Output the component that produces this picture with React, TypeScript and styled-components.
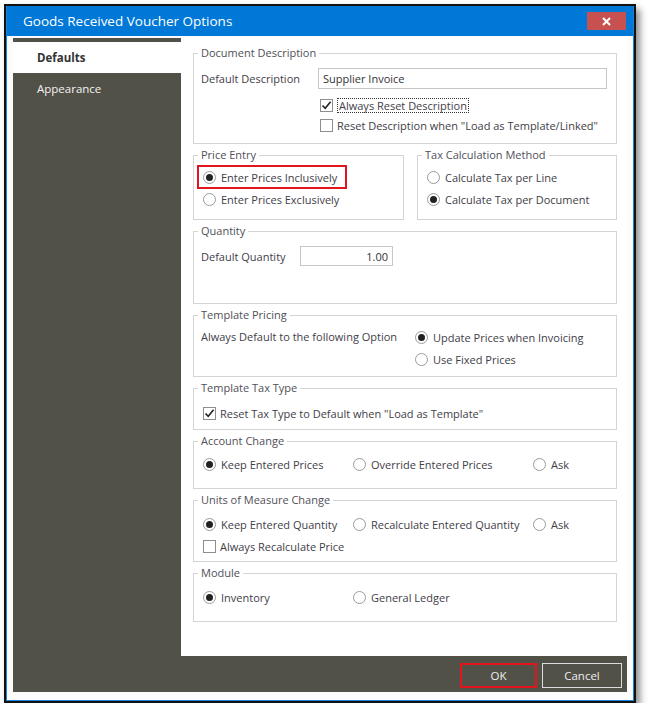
import React from 'react';
import styled, { createGlobalStyle } from 'styled-components';

const GlobalStyle = createGlobalStyle`
  html, body {
    margin: 0;
    background: #ffffff;
  }
  body {
    font-family: "Open Sans", "Noto Sans", sans-serif;
    font-size: 11px;
    color: #3f4048;
  }
`;

const Page = styled.div`
  padding: 4px 0 0 4px;
`;

const Window = styled.div`
  width: 632px;
  height: 699px;
  box-sizing: border-box;
  border: 2px solid #121212;
  box-shadow: 4px 5px 7px rgba(0, 0, 0, 0.45);
  background: #fff;
`;

const Frame = styled.div`
  height: 100%;
  box-sizing: border-box;
  border: 1px solid #1c84d8;
  border-top: none;
  display: flex;
  flex-direction: column;
`;

const TitleBar = styled.div`
  height: 30px;
  flex: none;
  background: #0078d7;
  display: flex;
  align-items: center;
  justify-content: space-between;
  padding: 0 7px 0 16px;
`;

const Title = styled.span`
  color: #fff;
  font-size: 13.5px;
`;

const CloseButton = styled.button`
  width: 39px;
  height: 18px;
  border: none;
  padding: 0;
  background: #c75050;
  display: flex;
  align-items: center;
  justify-content: center;
`;

const Body = styled.div`
  flex: 1;
  padding: 2px 6px 8px 6px;
  background: #fbfbfb;
  display: flex;
`;

const Panel = styled.div`
  flex: 1;
  background: #525148;
  display: grid;
  grid-template-columns: 168px 1fr;
  grid-template-rows: 618px 36px;
`;

const Nav = styled.nav`
  display: flex;
  flex-direction: column;
  padding-top: 4px;
`;

const NavItem = styled.div<{ $active?: boolean }>`
  height: 31px;
  display: flex;
  align-items: center;
  padding-left: 24px;
  font-size: 11.5px;
  font-weight: ${(p) => (p.$active ? 700 : 400)};
  color: ${(p) => (p.$active ? '#333' : '#f2f2f2')};
  background: ${(p) => (p.$active ? '#fff' : 'transparent')};
`;

const Content = styled.div`
  background: #fff;
  padding: 7px 10px 0 12px;
  display: flex;
  flex-direction: column;
  gap: 3px;
`;

const GroupBox = styled.fieldset<{ $h: number }>`
  margin: 0;
  padding: 0 8px 0 7px;
  border: 1px solid #d4d4d4;
  min-width: 0;
  box-sizing: border-box;
  height: ${(p) => p.$h}px;
  flex: none;
`;

const Legend = styled.legend`
  padding: 0 3px;
  margin-left: -3px;
  line-height: 16px;
  color: #505058;
`;

const Pair = styled.div`
  display: grid;
  grid-template-columns: 211px 200px;
  gap: 13px;
`;

const FieldRow = styled.div<{ $top: number; $label: number }>`
  display: flex;
  align-items: center;
  margin-top: ${(p) => p.$top}px;
  & > span {
    width: ${(p) => p.$label}px;
    flex: none;
  }
`;

const TextBox = styled.input<{ $w: number; $right?: boolean }>`
  width: ${(p) => p.$w}px;
  height: 21px;
  box-sizing: border-box;
  border: 1px solid #c6c6c6;
  padding: 0 4px;
  font: inherit;
  color: #333;
  text-align: ${(p) => (p.$right ? 'right' : 'left')};
  outline: none;
`;

const Stack = styled.div<{ $top: number; $indent: number }>`
  display: flex;
  flex-direction: column;
  align-items: flex-start;
  margin-top: ${(p) => p.$top}px;
  padding-left: ${(p) => p.$indent}px;
`;

const Option = styled.label<{ $h?: number; $highlight?: boolean }>`
  display: inline-flex;
  align-items: center;
  gap: 5px;
  height: ${(p) => p.$h ?? 22}px;
  white-space: nowrap;
  ${(p) =>
    p.$highlight &&
    `
    margin-left: -5px;
    padding: 0 9px 0 5px;
    outline: 2px solid #e3141b;
    outline-offset: -1px;
  `}
`;

const Focus = styled.span`
  border: 1px dotted #333;
  padding: 0 1px;
  line-height: 13px;
`;

const Circle = styled.span<{ $on?: boolean }>`
  width: 13px;
  height: 13px;
  box-sizing: border-box;
  border-radius: 50%;
  border: 1px solid #9b9b9b;
  background: #fff;
  display: flex;
  align-items: center;
  justify-content: center;
  flex: none;
  &::after {
    content: '';
    width: 7px;
    height: 7px;
    border-radius: 50%;
    background: ${(p) => (p.$on ? '#222' : 'transparent')};
  }
`;

const Box = styled.span`
  width: 13px;
  height: 13px;
  box-sizing: border-box;
  border: 1px solid #8e8e8e;
  background: #fff;
  display: flex;
  align-items: center;
  justify-content: center;
  flex: none;
`;

const Columns = styled.div<{ $top: number }>`
  display: grid;
  grid-template-columns: 150px 180px auto;
  margin-top: ${(p) => p.$top}px;
  padding-left: 2px;
`;

const Split = styled.div`
  display: grid;
  grid-template-columns: 214px auto;
  margin-top: 3px;
  & > span {
    height: 21px;
    display: flex;
    align-items: center;
  }
`;

const Footer = styled.div`
  grid-column: 1 / -1;
  display: flex;
  justify-content: flex-end;
  align-items: flex-start;
  gap: 5px;
  padding: 7px 5px 0 0;
`;

const Button = styled.button<{ $w: number; $focus?: boolean }>`
  width: ${(p) => p.$w}px;
  height: 25px;
  background: #525148;
  color: #eeeeee;
  font: inherit;
  font-size: 11.5px;
  border: ${(p) => (p.$focus ? '2px solid #e3141b' : '1px solid #dcdcdc')};
`;

const Radio = ({ on, children }: { on?: boolean; children: React.ReactNode }) => (
  <Option>
    <Circle $on={on} />
    {children}
  </Option>
);

const Check = ({ on, h, children }: { on?: boolean; h?: number; children: React.ReactNode }) => (
  <Option $h={h ?? 20} style={{ gap: 4 }}>
    <Box>
      {on && (
        <svg width="11" height="11" viewBox="0 0 11 11">
          <path d="M1.5 5.5 L4.2 8.3 L9.6 1.8" fill="none" stroke="#222" strokeWidth="1.6" />
        </svg>
      )}
    </Box>
    {children}
  </Option>
);

export default function App() {
  return (
    <>
      <GlobalStyle />
      <Page>
        <Window>
          <Frame>
            <TitleBar>
              <Title>Goods Received Voucher Options</Title>
              <CloseButton aria-label="Close">
                <svg width="9" height="9" viewBox="0 0 9 9">
                  <path d="M1 1 L8 8 M8 1 L1 8" stroke="#fff" strokeWidth="2" />
                </svg>
              </CloseButton>
            </TitleBar>
            <Body>
              <Panel>
                <Nav>
                  <NavItem $active>Defaults</NavItem>
                  <NavItem>Appearance</NavItem>
                </Nav>

                <Content>
                  <GroupBox $h={99}>
                    <Legend>Document Description</Legend>
                    <FieldRow $top={7} $label={117}>
                      <span>Default Description</span>
                      <TextBox $w={289} defaultValue="Supplier Invoice" />
                    </FieldRow>
                    <Stack $top={6} $indent={119}>
                      <Check on>
                        <Focus>Always Reset Description</Focus>
                      </Check>
                      <Check>Reset Description when "Load as Template/Linked"</Check>
                    </Stack>
                  </GroupBox>

                  <Pair>
                    <GroupBox $h={73}>
                      <Legend>Price Entry</Legend>
                      <Stack $top={3} $indent={2}>
                        <Option $highlight>
                          <Circle $on />
                          Enter Prices Inclusively
                        </Option>
                        <Radio>Enter Prices Exclusively</Radio>
                      </Stack>
                    </GroupBox>
                    <GroupBox $h={73}>
                      <Legend>Tax Calculation Method</Legend>
                      <Stack $top={3} $indent={2}>
                        <Radio>Calculate Tax per Line</Radio>
                        <Radio on>Calculate Tax per Document</Radio>
                      </Stack>
                    </GroupBox>
                  </Pair>

                  <GroupBox $h={81}>
                    <Legend>Quantity</Legend>
                    <FieldRow $top={7} $label={99}>
                      <span>Default Quantity</span>
                      <TextBox $w={93} $right defaultValue="1.00" style={{ height: 20 }} />
                    </FieldRow>
                  </GroupBox>

                  <GroupBox $h={70}>
                    <Legend>Template Pricing</Legend>
                    <Split>
                      <span>Always Default to the following Option</span>
                      <Stack $top={0} $indent={0}>
                        <Radio on>Update Prices when Invoicing</Radio>
                        <Radio>Use Fixed Prices</Radio>
                      </Stack>
                    </Split>
                  </GroupBox>

                  <GroupBox $h={50}>
                    <Legend>Template Tax Type</Legend>
                    <Stack $top={7} $indent={2}>
                      <Check on>Reset Tax Type to Default when "Load as Template"</Check>
                    </Stack>
                  </GroupBox>

                  <GroupBox $h={56}>
                    <Legend>Account Change</Legend>
                    <Columns $top={4}>
                      <Radio on>Keep Entered Prices</Radio>
                      <Radio>Override Entered Prices</Radio>
                      <Radio>Ask</Radio>
                    </Columns>
                  </GroupBox>

                  <GroupBox $h={70}>
                    <Legend>Units of Measure Change</Legend>
                    <Columns $top={5}>
                      <Radio on>Keep Entered Quantity</Radio>
                      <Radio>Recalculate Entered Quantity</Radio>
                      <Radio>Ask</Radio>
                    </Columns>
                    <Stack $top={0} $indent={2}>
                      <Check h={22}>Always Recalculate Price</Check>
                    </Stack>
                  </GroupBox>

                  <GroupBox $h={57}>
                    <Legend>Module</Legend>
                    <Columns $top={5}>
                      <Radio on>Inventory</Radio>
                      <Radio>General Ledger</Radio>
                    </Columns>
                  </GroupBox>
                </Content>

                <Footer>
                  <Button $w={77} $focus>OK</Button>
                  <Button $w={80}>Cancel</Button>
                </Footer>
              </Panel>
            </Body>
          </Frame>
        </Window>
      </Page>
    </>
  );
}
